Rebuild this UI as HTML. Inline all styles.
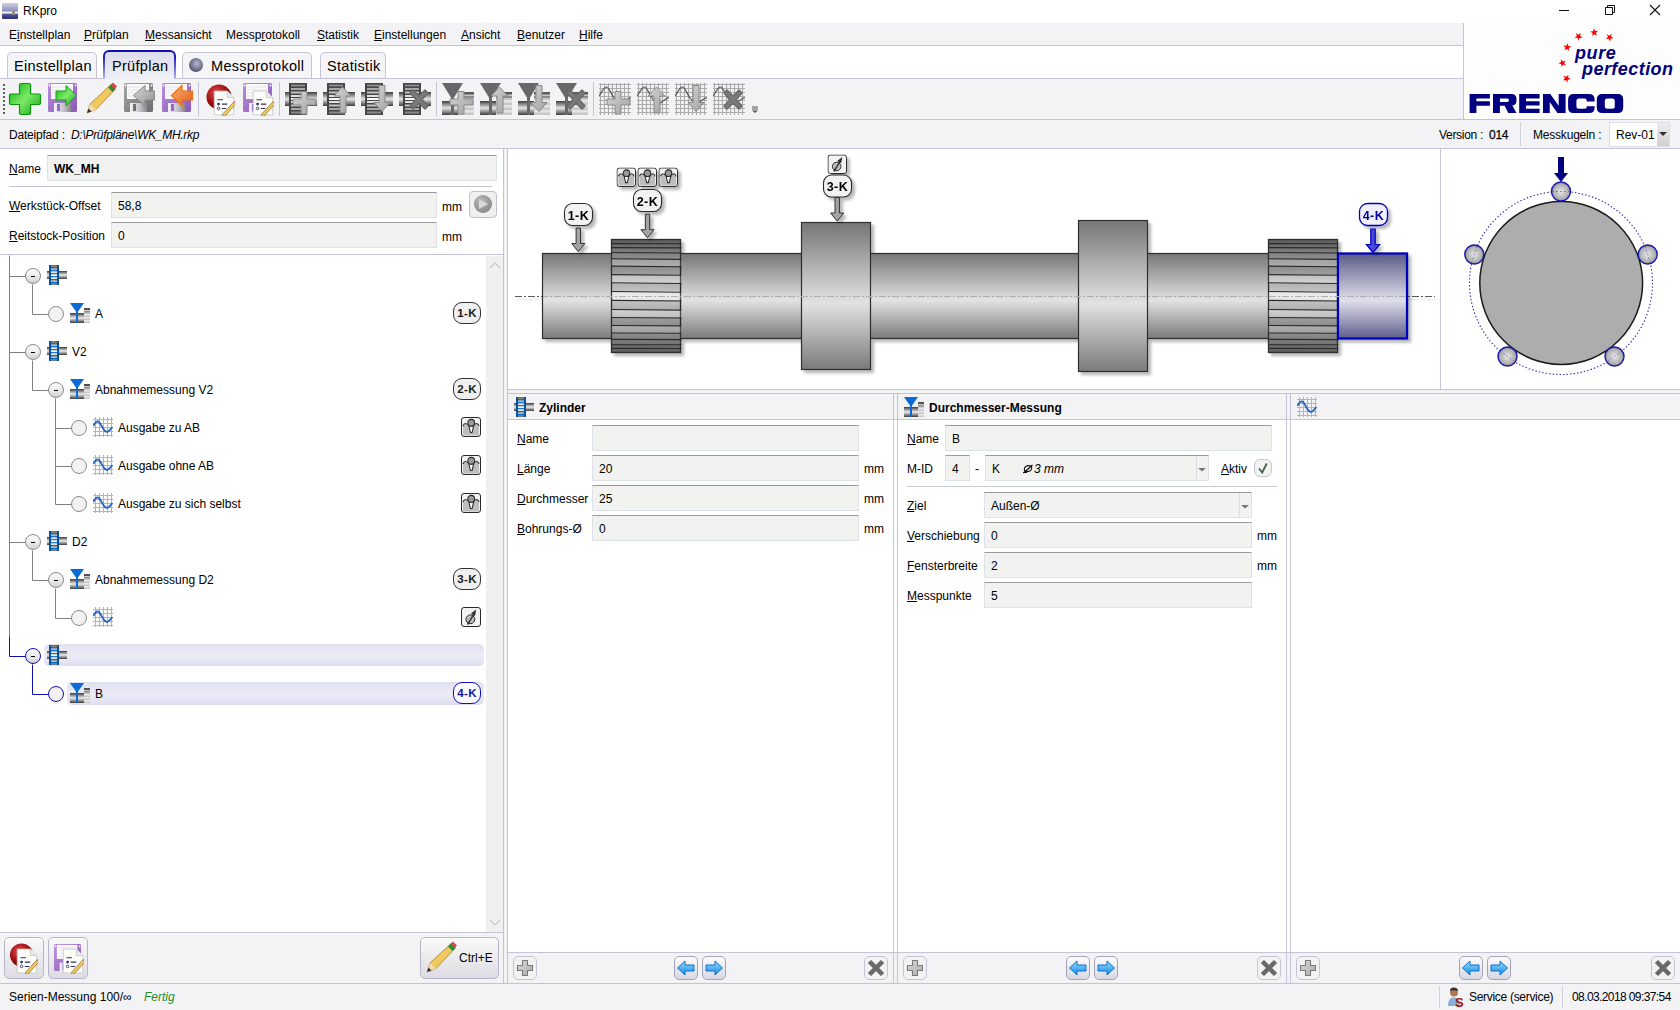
<!DOCTYPE html>
<html><head><meta charset="utf-8">
<style>
*{box-sizing:border-box}
body{margin:0;width:1680px;height:1010px;position:relative;overflow:hidden;background:#f3f3f6;font-family:"Liberation Sans",sans-serif;font-size:12px;color:#000}
.a{position:absolute}
.hl{position:absolute;height:1px;background:#c4c4d6}
.vl{position:absolute;width:1px;background:#c4c4d6}
.t{position:absolute;white-space:nowrap;line-height:14px}
.u{text-decoration:underline}
.fld{position:absolute;background:#f2f2f0;border:1px solid #dde1e8;border-top-color:#9a9a9a;height:26px}
.fld span{position:absolute;left:6px;top:6px;line-height:14px;white-space:nowrap}
.badge{position:absolute;width:28px;height:22px;border:1px solid #333;border-radius:9px;background:#f0f0f0;font-weight:bold;font-size:11.5px;color:#1a1a1a;text-align:center;line-height:21px;letter-spacing:.4px;text-indent:.4px}
.node{position:absolute;width:16px;height:16px;border-radius:50%;border:1px solid #8a8a8a;background:#f2f2f2}
.node.m{background:linear-gradient(#fbfbfb,#f0f0f0 40%,#d2d2d2)}
.node.m::after{content:"";position:absolute;left:5px;top:7px;width:4px;height:1px;background:#000}
.btn{position:absolute;border:1px solid #b5b5c8;border-radius:5px;background:linear-gradient(#fafafa,#dcdce2)}
.pbtn{position:absolute;width:24px;height:24px;border:1px solid #c5c5d8;border-radius:5px;background:#f2f2f0}
.pbtn svg{position:absolute;left:0;top:0}
.pbtn.ar{border-color:#a4a4b8;background:linear-gradient(#fbfbfd,#d8d8e2)}
</style></head><body>
<svg width="0" height="0" style="position:absolute">
<defs>
 <linearGradient id="gSh" x1="0" y1="0" x2="0" y2="1"><stop offset="0" stop-color="#3a3a3a"/><stop offset=".5" stop-color="#ededed"/><stop offset="1" stop-color="#3a3a3a"/></linearGradient>
 <linearGradient id="gBl" x1="0" y1="0" x2="1" y2="0"><stop offset="0" stop-color="#004a98"/><stop offset=".5" stop-color="#0a78e0"/><stop offset="1" stop-color="#004a98"/></linearGradient>
 <linearGradient id="gSt" x1="0" y1="0" x2="0" y2="1"><stop offset="0" stop-color="#202020"/><stop offset=".6" stop-color="#e8e8e8"/><stop offset="1" stop-color="#b0b0b0"/></linearGradient>
 <symbol id="cyl" viewBox="0 0 20 20">
  <rect x="0" y="6" width="20" height="8" fill="url(#gSh)"/>
  <rect x="2" y="0" width="10" height="20" fill="url(#gBl)"/>
  <g fill="#8c8070"><rect x="4" y=".5" width="6" height="1.6"/><rect x="4" y="18.2" width="6" height="1.6"/></g>
  <g fill="#c0b4a0"><rect x="4" y="3.3" width="6" height="1.8"/><rect x="4" y="15.2" width="6" height="1.8"/></g>
  <g fill="#ece4d8"><rect x="4" y="6.3" width="6" height="1.8"/><rect x="4" y="12.2" width="6" height="1.8"/></g>
  <rect x="4" y="9.3" width="6" height="1.8" fill="#fff"/>
 </symbol>
 <symbol id="meas" viewBox="0 0 20 20">
  <rect x="0" y="10" width="14" height="10" fill="url(#gSh)"/>
  <rect x="14" y="5" width="6" height="15" fill="#c8c8c8"/>
  <g fill="#505050"><rect x="14" y="5" width="6" height="2"/></g>
  <g fill="#909090"><rect x="14" y="8" width="6" height="1.5"/></g>
  <g fill="#e8e8e8"><rect x="14" y="11" width="6" height="1.5"/><rect x="14" y="14" width="6" height="1.5"/><rect x="14" y="17" width="6" height="1.5"/></g>
  <path d="M0 0H14L7 10Z" fill="#0a6ad8"/>
  <rect x="6" y="8" width="2" height="12" fill="#0a6ad8"/>
 </symbol>
 <symbol id="wave" viewBox="0 0 20 20">
  <g stroke="#b4b4b4" stroke-width="1" fill="none"><path d="M2.5 0V20M6.5 0V20M10.5 0V20M14.5 0V20M18.5 0V20M0 2.5H20M0 6.5H20M0 10.5H20M0 14.5H20M0 18.5H20"/></g>
  <path d="M0.5 9C2 5 4 3.5 6 5S9 11 11.5 13.5S15 15.5 19.5 10" fill="none" stroke="#2264c0" stroke-width="1.8"/>
 </symbol>
 <symbol id="probe" viewBox="0 0 20 20">
  <rect x=".5" y=".5" width="19" height="19" rx="2.5" fill="#f2f2f2" stroke="#2a2a2a"/>
  <path d="M2 18.5V8.5Q3 6.3 4.7 6.5Q6 6.6 7 7.5L9.6 15.5H11L13.5 7.3Q14.5 6.4 15.8 6.5Q17.5 6.8 18 8.5V18.5Z" fill="#bdbdbd"/>
  <path d="M2 9Q3 6.3 4.7 6.5Q6 6.6 7.3 8M13.2 8Q14.5 6.4 15.8 6.5Q17.5 6.8 18 9" fill="none" stroke="#2a2a2a" stroke-width="1.1"/>
  <path d="M7.9 9L9.4 15.5H11.1L12.6 9Z" fill="#fff" stroke="#2a2a2a" stroke-width="1.1"/>
  <circle cx="10.2" cy="5.8" r="3.4" fill="#9a9a9a" stroke="#2a2a2a" stroke-width="1.1"/>
 </symbol>
 <linearGradient id="gBa" x1="0" y1="0" x2="0" y2="1"><stop offset="0" stop-color="#8cdcff"/><stop offset="1" stop-color="#1a8ae8"/></linearGradient>
 <linearGradient id="gPl" x1="0" y1="0" x2="1" y2="1"><stop offset="0" stop-color="#dcdcdc"/><stop offset="1" stop-color="#a8a8a8"/></linearGradient>
 <symbol id="bplus" viewBox="0 0 22 22"><path d="M8.5 3.5H13.5V8.5H18.5V13.5H13.5V18.5H8.5V13.5H3.5V8.5H8.5Z" fill="url(#gPl)" stroke="#7a7a7a" stroke-width="1.1" stroke-linejoin="round"/></symbol>
 <symbol id="bleft" viewBox="0 0 22 22"><path d="M2.5 11L10 4V8H19V14H10V18Z" fill="url(#gBa)" stroke="#1070c0" stroke-width="1" stroke-linejoin="round"/></symbol>
 <symbol id="bright" viewBox="0 0 22 22"><path d="M19.5 11L12 4V8H3V14H12V18Z" fill="url(#gBa)" stroke="#1070c0" stroke-width="1" stroke-linejoin="round"/></symbol>
 <symbol id="bx" viewBox="0 0 22 22"><path d="M3.5 6L6 3.5L11 8.5L16 3.5L18.5 6L13.5 11L18.5 16L16 18.5L11 13.5L6 18.5L3.5 16L8.5 11Z" fill="#6a6a6a" stroke="#555" stroke-width="1" stroke-linejoin="round"/></symbol>
 <symbol id="dia" viewBox="0 0 20 20">
  <rect x=".5" y=".5" width="19" height="19" rx="2.5" fill="#f2f2f2" stroke="#2a2a2a"/>
  <circle cx="9.4" cy="12.3" r="4.4" fill="#bdbdbd" stroke="#2a2a2a" stroke-width="1"/>
  <path d="M6.7 17.3L13 6.8" stroke="#2a2a2a" stroke-width="1.3"/>
  <path d="M15.2 2.6L10 6.6L14 9Z" fill="#2a2a2a"/>
  <path d="M6.3 18L6.8 14.5L8.5 15.6Z" fill="#2a2a2a"/>
 </symbol>
</defs>
</svg>

<!-- title bar -->
<div class="a" style="left:0;top:0;width:1680px;height:23px;background:#fff"></div>
<div class="t" style="left:23px;top:4px;font-size:12px">RKpro</div>

<!-- menu bar -->
<div class="a" style="left:0;top:23px;width:1463px;height:22px;background:#f3f3f6"></div>
<div class="hl" style="left:0;top:45px;width:1463px"></div>
<div class="t" style="left:9px;top:28px">E<span class="u">i</span>nstellplan</div>
<div class="t" style="left:84px;top:28px"><span class="u">P</span>rüfplan</div>
<div class="t" style="left:145px;top:28px"><span class="u">M</span>essansicht</div>
<div class="t" style="left:226px;top:28px">Messp<span class="u">r</span>otokoll</div>
<div class="t" style="left:317px;top:28px"><span class="u">S</span>tatistik</div>
<div class="t" style="left:374px;top:28px"><span class="u">E</span>instellungen</div>
<div class="t" style="left:461px;top:28px"><span class="u">A</span>nsicht</div>
<div class="t" style="left:517px;top:28px"><span class="u">B</span>enutzer</div>
<div class="t" style="left:579px;top:28px"><span class="u">H</span>ilfe</div>

<!-- tab bar -->
<div class="a" style="left:0;top:46px;width:1463px;height:32px;background:#fff"></div>
<div class="hl" style="left:0;top:78px;width:1463px"></div>

<div class="a" style="left:7px;top:52px;width:90px;height:26px;border:1px solid #c4c4d6;border-bottom:none;border-radius:5px 5px 0 0;background:#f5f5f8"></div>
<div class="t" style="left:14px;top:58px;font-size:14.5px;line-height:17px;letter-spacing:.3px">Einstellplan</div>
<div class="a" style="left:103px;top:50px;width:73px;height:29px;border-radius:6px 6px 0 0;background:linear-gradient(#0c0cb0,#2020b8 25%,#b8b8e8)"></div>
<div class="a" style="left:105px;top:52px;width:69px;height:27px;border-radius:4px 4px 0 0;background:linear-gradient(#dcdcee,#f0f0f6)"></div>
<div class="t" style="left:112px;top:58px;font-size:14.5px;line-height:17px;letter-spacing:.3px">Prüfplan</div>
<div class="a" style="left:182px;top:52px;width:130px;height:26px;border:1px solid #c4c4d6;border-bottom:none;border-radius:5px 5px 0 0;background:#f5f5f8"></div>
<div class="a" style="left:189px;top:58px;width:14px;height:14px;border-radius:50%;background:radial-gradient(circle at 55% 40%,#b8b8cc,#5a5a78 70%,#4a4a66)"></div>
<div class="t" style="left:211px;top:58px;font-size:14.5px;line-height:17px;letter-spacing:.3px">Messprotokoll</div>
<div class="a" style="left:320px;top:52px;width:66px;height:26px;border:1px solid #c4c4d6;border-bottom:none;border-radius:5px 5px 0 0;background:#f5f5f8"></div>
<div class="t" style="left:327px;top:58px;font-size:14.5px;line-height:17px;letter-spacing:.3px">Statistik</div>

<!-- toolbar -->
<div class="hl" style="left:0;top:119px;width:1680px"></div>
<svg class="a" style="left:0;top:78px" width="770" height="41" viewBox="0 78 770 41">
 <defs>
  <linearGradient id="gGr" x1="0" y1="0" x2="1" y2="1"><stop offset="0" stop-color="#0cb40c"/><stop offset=".5" stop-color="#7ee86a"/><stop offset="1" stop-color="#0aa80a"/></linearGradient>
  <linearGradient id="gPu" x1="0" y1="0" x2="1" y2="1"><stop offset="0" stop-color="#b890dc"/><stop offset="1" stop-color="#8a58b8"/></linearGradient>
  <linearGradient id="gGy" x1="0" y1="0" x2="1" y2="1"><stop offset="0" stop-color="#a8a8a8"/><stop offset="1" stop-color="#6c6c6c"/></linearGradient>
  <linearGradient id="gShut" x1="0" y1="0" x2="1" y2="0"><stop offset="0" stop-color="#f4f4f4"/><stop offset=".6" stop-color="#c0c0c8"/><stop offset="1" stop-color="#888"/></linearGradient>
  <linearGradient id="gOr" x1="0" y1="0" x2="1" y2="1"><stop offset="0" stop-color="#ffb070"/><stop offset="1" stop-color="#e06010"/></linearGradient>
  <linearGradient id="gArGy" x1="0" y1="0" x2="1" y2="1"><stop offset="0" stop-color="#d8d8d8"/><stop offset="1" stop-color="#909090"/></linearGradient>
  <radialGradient id="gRed" cx=".4" cy=".35" r=".7"><stop offset="0" stop-color="#e05050"/><stop offset=".6" stop-color="#a01010"/><stop offset="1" stop-color="#700000"/></radialGradient>
  <linearGradient id="gSh32" x1="0" y1="0" x2="0" y2="1"><stop offset="0" stop-color="#3c3c3c"/><stop offset=".5" stop-color="#e6e6e6"/><stop offset="1" stop-color="#3c3c3c"/></linearGradient>
  <linearGradient id="gOv" x1="0" y1="0" x2="1" y2="1"><stop offset="0" stop-color="#d6d6d6"/><stop offset="1" stop-color="#a0a0a0"/></linearGradient>
  <symbol id="floppy" viewBox="0 0 30 29">
   <rect x="0" y="0" width="29" height="29" rx="1.5" fill="var(--fc)"/>
   <rect x="3" y="1" width="22" height="15" fill="#fafafa"/>
   <g stroke="#dcdce8" stroke-width=".8"><path d="M4 4H24M4 7H24M4 10H24M4 13H24"/></g>
   <rect x="6" y="20" width="17" height="9" fill="url(#gShut)"/>
   <rect x="9" y="21" width="3" height="7" fill="var(--fc2)"/>
   <circle cx="1.5" cy="2.5" r=".9" fill="#fff"/><circle cx="27.5" cy="2.5" r=".9" fill="#fff"/>
  </symbol>
  <symbol id="doc" viewBox="0 0 20 24">
   <path d="M1 1H13L19 7V23H1Z" fill="#fcfcf8" stroke="#c8c8c8" stroke-width=".8"/>
   <path d="M13 1V7H19" fill="#e8e8e8" stroke="#c8c8c8" stroke-width=".8"/>
   <g stroke="#303060" stroke-width="1"><path d="M4 9H9M8 13H13M8 17H12"/></g>
   <circle cx="5" cy="13" r="1.3" fill="#303060"/><circle cx="5" cy="17" r="1.2" fill="none" stroke="#303060" stroke-width=".8"/>
   <path d="M9 22L19 11L21 13L11 24L8.5 24.5Z" fill="#f0c860" stroke="#806020" stroke-width=".6"/>
   <path d="M19 11L20.5 9.5L22.5 11.5L21 13Z" fill="#e06060"/>
  </symbol>
  <symbol id="gcyl" viewBox="0 0 32 32">
   <rect x="0" y="9" width="32" height="14" fill="url(#gSh32)"/>
   <rect x="4" y="0" width="18" height="32" fill="#454545"/>
   <g fill="#8a8a8a"><rect x="6" y="1.5" width="14" height="2"/><rect x="6" y="28.5" width="14" height="2"/></g>
   <g fill="#a8a8a8"><rect x="6" y="5" width="14" height="2"/><rect x="6" y="25" width="14" height="2"/></g>
   <g fill="#c4c4c4"><rect x="6" y="8.5" width="14" height="2"/><rect x="6" y="21.5" width="14" height="2"/></g>
   <g fill="#e0e0e0"><rect x="6" y="12" width="14" height="2"/><rect x="6" y="18" width="14" height="2"/></g>
   <rect x="6" y="15" width="14" height="2" fill="#fafafa"/>
  </symbol>
  <symbol id="gmeas" viewBox="0 0 32 32">
   <rect x="0" y="18" width="16" height="14" fill="url(#gSh32)"/>
   <rect x="16" y="9" width="16" height="23" fill="#c8c8c8"/>
   <g fill="#5a5a5a"><rect x="16" y="9" width="16" height="2.5"/></g>
   <g fill="#8c8c8c"><rect x="16" y="13" width="16" height="2"/></g>
   <g fill="#e4e4e4"><rect x="16" y="17" width="16" height="2.5"/><rect x="16" y="22" width="16" height="2.5"/><rect x="16" y="27" width="16" height="2.5"/></g>
   <path d="M0 0H21L10.5 17Z" fill="#686868"/>
   <rect x="9" y="14" width="3" height="18" fill="#686868"/>
  </symbol>
  <symbol id="ggrid" viewBox="0 0 32 32">
   <g stroke="#ababab" stroke-width="1.1" fill="none"><path d="M1.5 0V32M5.5 0V32M9.5 0V32M13.5 0V32M17.5 0V32M21.5 0V32M25.5 0V32M29.5 0V32M0 1.5H32M0 5.5H32M0 9.5H32M0 13.5H32M0 17.5H32M0 21.5H32M0 25.5H32M0 29.5H32"/></g>
   <path d="M0 13C3 9 5 4 7.5 4S12 11 15 15S21 22 25 19S30 14 32 15" fill="none" stroke="#555" stroke-width="1.2"/>
  </symbol>
  <symbol id="oplus" viewBox="0 0 32 32"><path d="M16 8.5H22V16H31V22H22V31H16V22H8V16H16Z" fill="url(#gOv)" stroke="#8a8a8a" stroke-width="1"/></symbol>
  <symbol id="oup" viewBox="0 0 32 32"><path d="M19.5 4L28 13H23V30H17V13H11Z" fill="url(#gOv)" stroke="#8a8a8a" stroke-width="1"/></symbol>
  <symbol id="odown" viewBox="0 0 32 32"><path d="M18 2.5H24V19.5H29L21 28.5L13 19.5H18Z" fill="url(#gOv)" stroke="#8a8a8a" stroke-width="1"/></symbol>
  <symbol id="ox" viewBox="0 0 32 32"><path d="M11 10L14 7L20 13L26 7L29 10L23 16.5L29 23L26 26L20 20L14 26L11 23L17 16.5Z" fill="#7a7a7a" stroke="#6a6a6a" stroke-width="1.5" stroke-linejoin="round"/></symbol>
 </defs>
 <g fill="#606060"><rect x="3" y="84" width="2" height="2"/><rect x="3" y="88" width="2" height="2"/><rect x="3" y="92" width="2" height="2"/><rect x="3" y="96" width="2" height="2"/><rect x="3" y="100" width="2" height="2"/><rect x="3" y="104" width="2" height="2"/><rect x="3" y="108" width="2" height="2"/><rect x="3" y="112" width="2" height="2"/></g>
 <!-- green plus -->
 <path d="M21 83.5H29C30 83.5 30.5 84 30.5 85V94H39C40 94 40.5 94.5 40.5 95.5V103C40.5 104 40 104.5 39 104.5H30.5V113C30.5 114 30 114.5 29 114.5H21C20 114.5 19.5 114 19.5 113V104.5H11C10 104.5 9.5 104 9.5 103V95.5C9.5 94.5 10 94 11 94H19.5V85C19.5 84 20 83.5 21 83.5Z" fill="url(#gGr)" stroke="#089808" stroke-width="1.2"/>
 <!-- floppy green arrow -->
 <svg x="48" y="83" width="30" height="29" style="--fc:url(#gPu);--fc2:#9a68c8"><use href="#floppy"/></svg>
 <path d="M56 91H66V85.5L76.5 95.5L66 106V100H56Z" fill="url(#gGr)" stroke="#18a018" stroke-width="1"/>
 <!-- pencil -->
 <path d="M87 113L90 104L111 84.5L115.5 89L96 109.5Z" fill="#f0c860" stroke="#b08030" stroke-width=".8"/>
 <path d="M87 113L90 104L93 107L96 109.5Z" fill="#f4dcb0"/>
 <path d="M87 113L88.5 108.5L91.5 111.5Z" fill="#303030"/>
 <path d="M108 87.5L111 84.5L115.5 89L112.5 92Z" fill="#2a8a3a"/>
 <path d="M110.5 85L113 82.5L117 86.5L114.5 89Z" fill="#d04848"/>
 <!-- grey floppy grey arrow -->
 <svg x="124" y="83" width="30" height="29" style="--fc:url(#gGy);--fc2:#707070"><use href="#floppy"/></svg>
 <path d="M154.5 91H145V85.5L133.5 95.5L145 106V100H154.5Z" fill="url(#gArGy)" stroke="#888" stroke-width="1"/>
 <!-- purple floppy orange arrow -->
 <svg x="162" y="83" width="30" height="29" style="--fc:url(#gPu);--fc2:#9a68c8"><use href="#floppy"/></svg>
 <path d="M192.5 91H182V85.5L171.5 95.5L182 106V100H192.5Z" fill="url(#gOr)" stroke="#f07010" stroke-width="1.2"/>
 <rect x="198" y="82" width="1" height="34" fill="#c4c4d6"/>
 <!-- red circle doc -->
 <circle cx="219" cy="97" r="12.5" fill="url(#gRed)"/>
 <svg x="213" y="90" width="22" height="26" viewBox="0 0 22 26"><use href="#doc"/></svg>
 <!-- floppy doc -->
 <svg x="243" y="83" width="30" height="29" style="--fc:url(#gPu);--fc2:#9a68c8"><use href="#floppy"/></svg>
 <svg x="252" y="90" width="22" height="26" viewBox="0 0 22 26"><use href="#doc"/></svg>
 <rect x="279" y="82" width="1" height="34" fill="#c4c4d6"/>
 <!-- cylinders -->
 <use href="#gcyl" x="285" y="83" width="32" height="32"/><use href="#oplus" x="285" y="83" width="32" height="32"/>
 <use href="#gcyl" x="323" y="83" width="32" height="32"/><use href="#oup" x="323" y="83" width="32" height="32"/>
 <use href="#gcyl" x="361" y="83" width="32" height="32"/><use href="#odown" x="361" y="83" width="32" height="32"/>
 <use href="#gcyl" x="399" y="83" width="32" height="32"/><use href="#ox" x="399" y="83" width="32" height="32"/>
 <rect x="436" y="82" width="1" height="34" fill="#c4c4d6"/>
 <use href="#gmeas" x="442" y="83" width="32" height="32"/><use href="#oplus" x="442" y="83" width="32" height="32"/>
 <use href="#gmeas" x="480" y="83" width="32" height="32"/><use href="#oup" x="480" y="83" width="32" height="32"/>
 <use href="#gmeas" x="518" y="83" width="32" height="32"/><use href="#odown" x="518" y="83" width="32" height="32"/>
 <use href="#gmeas" x="556" y="83" width="32" height="32"/><use href="#ox" x="556" y="83" width="32" height="32"/>
 <rect x="593" y="82" width="1" height="34" fill="#c4c4d6"/>
 <use href="#ggrid" x="599" y="83" width="32" height="32"/><use href="#oplus" x="599" y="83" width="32" height="32"/>
 <use href="#ggrid" x="637" y="83" width="32" height="32"/><use href="#oup" x="637" y="83" width="32" height="32"/>
 <use href="#ggrid" x="675" y="83" width="32" height="32"/><use href="#odown" x="675" y="83" width="32" height="32"/>
 <use href="#ggrid" x="713" y="83" width="32" height="32"/><use href="#ox" x="713" y="83" width="32" height="32"/>
 <path d="M752 107H758M752 109H758" stroke="#555" stroke-width="1"/>
 <path d="M752 110.5H758L755 113Z" fill="#555"/>
</svg>

<!-- logo area -->
<div class="a" style="left:1464px;top:23px;width:216px;height:96px;background:#fdfdfd"></div>
<div class="vl" style="left:1463px;top:23px;height:96px"></div>
<svg class="a" style="left:1464px;top:23px" width="216" height="96" viewBox="1464 23 216 96">
 <defs><path id="star" d="M0,-4.2L1,-1.35L4,-1.3L1.6,.5L2.5,3.4L0,1.7L-2.5,3.4L-1.6,.5L-4,-1.3L-1,-1.35Z" fill="#ff0000"/></defs>
 <use href="#star" transform="translate(1594.3 32.5) rotate(-5)"/>
 <use href="#star" transform="translate(1578.5 36.5) rotate(-36)"/>
 <use href="#star" transform="translate(1609.6 37.3) rotate(30)"/>
 <use href="#star" transform="translate(1567.2 47.3) rotate(-64)"/>
 <use href="#star" transform="translate(1562.5 63) rotate(-92)"/>
 <use href="#star" transform="translate(1566.6 78.5) rotate(-118)"/>
 <text x="1575" y="59" font-family="Liberation Sans" font-size="18" font-weight="bold" font-style="italic" fill="#000080" letter-spacing=".6">pure</text>
 <text x="1582" y="75" font-family="Liberation Sans" font-size="18" font-weight="bold" font-style="italic" fill="#000080" letter-spacing=".45">perfection</text>
 <g fill="#000080" fill-rule="evenodd">
  <path d="M1469.6 94.1H1489.9V98.6H1476.4V101.25H1489.9V105.7H1476.4V112.9H1469.6Z"/>
  <path d="M1493 94.1H1511Q1516.5 94.1 1516.5 99V100.5Q1516.5 104.8 1512.3 105.5L1516.5 112.9H1508.3L1504.6 105.7H1499.9V112.9H1493ZM1499.9 98.6H1507.3Q1509 98.6 1509 100.25Q1509 101.9 1507.3 101.9H1499.9Z"/>
  <path d="M1519.2 94.1H1539.6V98.5H1526V101.3H1539.6V105.6H1526V108.8H1539.6V112.9H1519.2Z"/>
  <path d="M1543 94.1H1550.3L1558.7 105.7V94.1H1565.6V112.9H1557.4L1549.75 102.1V112.9H1543Z"/>
  <path d="M1573.6 94.1H1589.1Q1594.6 94.1 1594.6 99.6V101.6H1586.8V100.9Q1586.8 98.4 1584.3 98.4H1578.9Q1576.4 98.4 1576.4 100.9V106.25Q1576.4 108.75 1578.9 108.75H1584.3Q1586.8 108.75 1586.8 106.25H1594.6V107.4Q1594.6 112.9 1589.1 112.9H1573.6Q1568.1 112.9 1568.1 107.4V99.6Q1568.1 94.1 1573.6 94.1Z"/>
  <path d="M1602.3 94.1H1617.7Q1623.2 94.1 1623.2 99.6V107.4Q1623.2 112.9 1617.7 112.9H1602.3Q1596.8 112.9 1596.8 107.4V99.6Q1596.8 94.1 1602.3 94.1ZM1607.3 98.4Q1604.8 98.4 1604.8 100.9V106.25Q1604.8 108.75 1607.3 108.75H1612.3Q1614.8 108.75 1614.8 106.25V100.9Q1614.8 98.4 1612.3 98.4Z"/>
 </g>
</svg>
<!-- window controls -->
<svg class="a" style="left:1550px;top:0" width="130" height="23">
 <path d="M9 10.5H19" stroke="#111" stroke-width="1"/>
 <path d="M55.5 7.5H62.5V14.5H55.5Z M57.5 7.5V5.5H64.5V12.5H62.5" fill="none" stroke="#111" stroke-width="1"/>
 <path d="M100 5L110 15M110 5L100 15" stroke="#111" stroke-width="1.1"/>
</svg>
<!-- path bar right -->
<div class="t" style="left:1439px;top:128px;letter-spacing:-.3px">Version :&nbsp;<b style="font-weight:normal;-webkit-text-stroke:.25px #000"> 014</b></div>
<div class="vl" style="left:1520px;top:122px;height:24px;background:#d0d0dc"></div>
<div class="t" style="left:1533px;top:128px;letter-spacing:-.2px">Messkugeln :</div>
<div class="a" style="left:1609px;top:122px;width:61px;height:25px;background:#fff;border:1px solid #dcdce6"></div>
<div class="a" style="left:1657px;top:123px;width:12px;height:23px;background:linear-gradient(#ececec,#d0d0d0)"></div>
<svg class="a" style="left:1659px;top:132px" width="8" height="5"><path d="M0 0H8L4 4Z" fill="#333"/></svg>
<div class="t" style="left:1616px;top:128px">Rev-01</div>

<!-- path bar -->
<div class="t" style="left:9px;top:128px;letter-spacing:-.2px">Dateipfad :</div>
<div class="t" style="left:71px;top:128px;font-style:italic;letter-spacing:-.3px">D:\Prüfpläne\WK_MH.rkp</div>
<div class="hl" style="left:0;top:148px;width:1680px"></div>

<!-- left panel -->
<div class="a" style="left:0;top:149px;width:503px;height:105px;background:#fff"></div>
<div class="hl" style="left:0;top:254px;width:503px"></div>
<div class="a" style="left:0;top:255px;width:503px;height:677px;background:#fff"></div>
<div class="hl" style="left:0;top:932px;width:503px"></div>

<!-- left form -->
<div class="t" style="left:9px;top:162px"><span class="u">N</span>ame</div>
<div class="fld" style="left:47px;top:155px;width:450px"><span style="font-weight:bold">WK_MH</span></div>
<div class="hl" style="left:9px;top:186px;width:483px"></div>
<div class="t" style="left:9px;top:199px"><span class="u">W</span>erkstück-Offset</div>
<div class="fld" style="left:111px;top:192px;width:326px"><span>58,8</span></div>
<div class="t" style="left:442px;top:200px">mm</div>
<div class="btn" style="left:469px;top:191px;width:28px;height:27px;border-radius:4px;border-color:#c0c0d0;background:#f0f0ee"><div class="a" style="left:4px;top:3px;width:18px;height:18px;border-radius:50%;background:radial-gradient(circle at 40% 35%,#bbb,#777)"></div><svg class="a" style="left:9px;top:7px" width="9" height="10"><path d="M0 0L9 5L0 10Z" fill="#d8d8d8"/></svg></div>
<div class="t" style="left:9px;top:229px"><span class="u">R</span>eitstock-Position</div>
<div class="fld" style="left:111px;top:222px;width:326px"><span>0</span></div>
<div class="t" style="left:442px;top:230px">mm</div>

<!-- tree -->
<div class="a" style="left:486px;top:256px;width:17px;height:676px;background:#f0f0f0"></div>
<svg class="a" style="left:489px;top:262px" width="12" height="8"><path d="M1 6L6 1L11 6" fill="none" stroke="#c8c8c8" stroke-width="1.2"/></svg>
<svg class="a" style="left:489px;top:918px" width="12" height="8"><path d="M1 2L6 7L11 2" fill="none" stroke="#c8c8c8" stroke-width="1.2"/></svg>

<!-- highlight rows -->
<div class="a" style="left:44px;top:644px;width:440px;height:22px;border-radius:5px;background:linear-gradient(#e0e0f0,#ececf7 50%,#dedef0)"></div>
<div class="a" style="left:67px;top:682px;width:417px;height:23px;border-radius:5px;background:linear-gradient(#e0e0f0,#ececf7 50%,#dedef0)"></div>

<svg class="a" style="left:0;top:255px" width="120" height="460">
 <g fill="none" stroke="#808080" stroke-width="1" transform="translate(0.5,0.5)">
  <path d="M9 0V381"/>
  <path d="M9 21H25M9 97H25M9 287H25"/>
  <path d="M32 29V59H48M32 105V135H48M32 295V325H48"/>
  <path d="M55 143V249M55 173H71M55 211H71M55 249H71"/>
  <path d="M55 333V363H71"/>
 </g>
 <g fill="none" stroke="#1010b0" stroke-width="1" transform="translate(0.5,0.5)">
  <path d="M9 381V401H25"/>
  <path d="M32 409V439H48"/>
 </g>
</svg>

<div class="node m" style="left:25px;top:268px"></div>
<div class="node" style="left:48px;top:306px"></div>
<div class="node m" style="left:25px;top:344px"></div>
<div class="node m" style="left:48px;top:382px"></div>
<div class="node" style="left:71px;top:420px"></div>
<div class="node" style="left:71px;top:458px"></div>
<div class="node" style="left:71px;top:496px"></div>
<div class="node m" style="left:25px;top:534px"></div>
<div class="node m" style="left:48px;top:572px"></div>
<div class="node" style="left:71px;top:610px"></div>
<div class="node m" style="left:25px;top:648px;border-color:#1010b0"></div>
<div class="node" style="left:48px;top:686px;border-color:#1010b0"></div>

<svg class="a" style="left:47px;top:265px" width="20" height="20"><use href="#cyl"/></svg>
<svg class="a" style="left:70px;top:303px" width="20" height="20"><use href="#meas"/></svg>
<svg class="a" style="left:47px;top:341px" width="20" height="20"><use href="#cyl"/></svg>
<svg class="a" style="left:70px;top:379px" width="20" height="20"><use href="#meas"/></svg>
<svg class="a" style="left:93px;top:417px" width="20" height="20"><use href="#wave"/></svg>
<svg class="a" style="left:93px;top:455px" width="20" height="20"><use href="#wave"/></svg>
<svg class="a" style="left:93px;top:493px" width="20" height="20"><use href="#wave"/></svg>
<svg class="a" style="left:47px;top:531px" width="20" height="20"><use href="#cyl"/></svg>
<svg class="a" style="left:70px;top:569px" width="20" height="20"><use href="#meas"/></svg>
<svg class="a" style="left:93px;top:607px" width="20" height="20"><use href="#wave"/></svg>
<svg class="a" style="left:47px;top:645px" width="20" height="20"><use href="#cyl"/></svg>
<svg class="a" style="left:70px;top:683px" width="20" height="20"><use href="#meas"/></svg>

<div class="t" style="left:95px;top:307px">A</div>
<div class="t" style="left:72px;top:345px">V2</div>
<div class="t" style="left:95px;top:383px">Abnahmemessung V2</div>
<div class="t" style="left:118px;top:421px">Ausgabe zu AB</div>
<div class="t" style="left:118px;top:459px">Ausgabe ohne AB</div>
<div class="t" style="left:118px;top:497px">Ausgabe zu sich selbst</div>
<div class="t" style="left:72px;top:535px">D2</div>
<div class="t" style="left:95px;top:573px">Abnahmemessung D2</div>
<div class="t" style="left:95px;top:687px">B</div>

<div class="badge" style="left:453px;top:302px">1-K</div>
<div class="badge" style="left:453px;top:378px">2-K</div>
<div class="badge" style="left:453px;top:568px">3-K</div>
<div class="badge" style="left:453px;top:682px;border-color:#1010c0;color:#1010b0;background:#fafaff">4-K</div>
<svg class="a" style="left:461px;top:417px" width="20" height="20"><use href="#probe"/></svg>
<svg class="a" style="left:461px;top:455px" width="20" height="20"><use href="#probe"/></svg>
<svg class="a" style="left:461px;top:493px" width="20" height="20"><use href="#probe"/></svg>
<svg class="a" style="left:461px;top:607px" width="20" height="20"><use href="#dia"/></svg>

<!-- left bottom buttons -->
<div class="btn" style="left:4px;top:937px;width:40px;height:42px"></div>
<div class="btn" style="left:48px;top:937px;width:40px;height:42px"></div>
<div class="btn" style="left:420px;top:937px;width:79px;height:42px"></div>
<svg class="a" style="left:8px;top:942px" width="34" height="34" viewBox="205 84 34 34"><circle cx="218.5" cy="97" r="11.5" fill="url(#gRed)"/><svg x="213" y="90" width="22" height="26" viewBox="0 0 22 26"><use href="#doc"/></svg></svg>
<svg class="a" style="left:52px;top:942px" width="34" height="34" viewBox="241 84 34 34"><svg x="243" y="86" width="28" height="27" style="--fc:url(#gPu);--fc2:#9a68c8"><use href="#floppy"/></svg><svg x="251" y="90" width="22" height="26" viewBox="0 0 22 26"><use href="#doc"/></svg></svg>
<svg class="a" style="left:424px;top:941px" width="34" height="34" viewBox="84 82 34 34"><path d="M87 113L90 104L111 84.5L115.5 89L96 109.5Z" fill="#f0c860" stroke="#b08030" stroke-width=".8"/><path d="M87 113L90 104L93 107L96 109.5Z" fill="#f4dcb0"/><path d="M87 113L88.5 108.5L91.5 111.5Z" fill="#303030"/><path d="M108 87.5L111 84.5L115.5 89L112.5 92Z" fill="#2a8a3a"/><path d="M110.5 85L113 82.5L117 86.5L114.5 89Z" fill="#d04848"/></svg>
<!-- title icon -->
<div class="a" style="left:2px;top:3px;width:16px;height:16px;border-radius:1px;background:linear-gradient(#cfd0e4,#9696c4 45%,#5a5aa0 65%,#2c2c7c)"></div>
<div class="a" style="left:2px;top:11px;width:16px;height:3px;background:linear-gradient(#a0a0a0,#f0f0ea,#a0a0a0)"></div>
<div class="a" style="left:12px;top:10px;width:3px;height:5px;background:#909090"></div>
<!-- status user icon -->
<svg class="a" style="left:1447px;top:987px" width="18" height="21">
 <circle cx="7" cy="5.5" r="4" fill="#b07850"/><path d="M3 4C3 1 5 .5 7 .5S11 1.5 11 4L10 3.5H4Z" fill="#333"/>
 <path d="M1 19C1 13 3 10.5 7 10.5S13 13 13 19Z" fill="#8ab0d8"/>
 <text x="8" y="19.5" font-family="Liberation Sans" font-weight="bold" font-size="13" fill="#a01010">S</text>
</svg>
<div class="t" style="left:459px;top:951px">Ctrl+E</div>

<!-- status bar -->
<div class="t" style="left:9px;top:990px">Serien-Messung 100/∞</div>
<div class="t" style="left:144px;top:990px;color:#1f8a1f;font-style:italic">Fertig</div>
<div class="vl" style="left:1439px;top:986px;height:22px;background:#d0d0dc"></div>
<div class="vl" style="left:1562px;top:986px;height:22px;background:#d0d0dc"></div>
<div class="t" style="left:1469px;top:990px;letter-spacing:-.3px">Service (service)</div>
<div class="t" style="left:1572px;top:990px;letter-spacing:-0.6px">08.03.2018 09:37:54</div>

<!-- splitter -->
<div class="vl" style="left:503px;top:149px;height:834px"></div>
<div class="vl" style="left:507px;top:149px;height:834px"></div>

<!-- graphics -->
<div class="a" style="left:508px;top:149px;width:1172px;height:240px;background:#fff"></div>
<div class="vl" style="left:1440px;top:149px;height:240px"></div>
<svg class="a" style="left:508px;top:149px" width="932" height="240" viewBox="508 149 932 240">
 <defs>
  <linearGradient id="gCy" x1="0" y1="0" x2="0" y2="1"><stop offset="0" stop-color="#767676"/><stop offset=".55" stop-color="#e2e2e2"/><stop offset="1" stop-color="#7a7a7a"/></linearGradient>
  <linearGradient id="gCyB" x1="0" y1="0" x2="0" y2="1"><stop offset="0" stop-color="#5a5a86"/><stop offset=".55" stop-color="#e0e0ec"/><stop offset="1" stop-color="#5e5e8c"/></linearGradient>
  <linearGradient id="gGe" x1="0" y1="0" x2="0" y2="1"><stop offset="0" stop-color="#5c5c5c"/><stop offset=".12" stop-color="#808080"/><stop offset=".5" stop-color="#eaeaea"/><stop offset=".88" stop-color="#808080"/><stop offset="1" stop-color="#5c5c5c"/></linearGradient>
  <filter id="sh" x="-10%" y="-10%" width="130%" height="130%"><feGaussianBlur in="SourceAlpha" stdDeviation="1.6"/><feOffset dx="2.5" dy="3" result="b"/><feComponentTransfer in="b" result="c"><feFuncA type="linear" slope=".28"/></feComponentTransfer><feMerge><feMergeNode in="c"/><feMergeNode in="SourceGraphic"/></feMerge></filter>
  <g id="gear">
   <rect x="0" y="0" width="69" height="113" fill="url(#gGe)" stroke="#2e2e2e" stroke-width="1.3"/>
   <g fill="#fff" opacity=".15"><rect x="0" y="19.5" width="69" height="6.9"/><rect x="0" y="35.3" width="70" height="8.3"/><rect x="0" y="52" width="70" height="9"/><rect x="0" y="70" width="70" height="8"/><rect x="0" y="86" width="70" height="7.5"/></g>
   <g fill="#000" opacity=".12"><rect x="0" y="27" width="70" height="8.3"/><rect x="0" y="43.6" width="70" height="8.4"/><rect x="0" y="61" width="70" height="9"/><rect x="0" y="78" width="70" height="8"/></g>
   <g stroke="#2a2a2a" stroke-width="1.1" fill="none">
    <path d="M0 4.1L70 4.3M0 8.1L70 8.4M0 13L70 13.5M0 19.2L70 19.9M0 26.6L70 27.3M0 35.1L70 35.8M0 43.3L70 44M0 52L70 52.7M0 60.9L70 61.5M0 70L70 70.6M0 78L70 78.5M0 86L70 86.4M0 93.5L70 93.8M0 99.9L70 100.1M0 105.2L70 105.3M0 108.9L70 109"/>
   </g>
  </g>
  <g id="bdg">
   <rect x="0.5" y="0.5" width="28" height="22" rx="8" fill="#f2f2f2" stroke="#2a2a2a" stroke-width="1.1"/>
  </g>
  <path id="arr" d="M-2.2 0H2.2V15.5H6.6L0 23.5L-6.6 15.5H-2.2Z"/>
 </defs>
 <path d="M515 296.5H1435" stroke="#5a5a5a" stroke-width="1.2" stroke-dasharray="7 2 2 2"/><path d="M517 299.5H542M1409 299.5H1437" stroke="#000" stroke-opacity=".05" stroke-width="2.5"/>
 <g filter="url(#sh)">
  <rect x="542.5" y="253.5" width="865" height="85" fill="url(#gCy)" stroke="#2e2e2e" stroke-width="1.2"/>
  <rect x="801.5" y="222.5" width="69" height="147" fill="url(#gCy)" stroke="#2e2e2e" stroke-width="1.2"/>
  <rect x="1078.5" y="220.5" width="69" height="151" fill="url(#gCy)" stroke="#2e2e2e" stroke-width="1.2"/>
  <use href="#gear" transform="translate(611.5 239.5)"/>
  <use href="#gear" transform="translate(1268.5 239.5)"/>
  <rect x="1338" y="253.5" width="69" height="85" fill="url(#gCyB)" stroke="#0000c0" stroke-width="2.2"/>
 </g>
 <path d="M543 296.5H1407" stroke="#b0b0b0" stroke-width="1.1" stroke-dasharray="7 2 2 2" stroke-dashoffset="2"/>
 <g filter="url(#sh)">
  <use href="#arr" transform="translate(578.3 228)" fill="#a4a4a4" stroke="#333" stroke-width="1"/>
  <use href="#arr" transform="translate(647.5 214.2)" fill="#a4a4a4" stroke="#333" stroke-width="1"/>
  <use href="#arr" transform="translate(837.2 197.5)" fill="#a4a4a4" stroke="#333" stroke-width="1"/>
  <use href="#arr" transform="translate(1373 229)" fill="#4a4ad8" stroke="#0000c0" stroke-width="1.2"/>
  <use href="#bdg" transform="translate(564 203)"/>
  <use href="#bdg" transform="translate(633 189)"/>
  <use href="#bdg" transform="translate(823 174.5)"/>
  <rect x="1359.5" y="203.5" width="28" height="22" rx="8" fill="#f0f0fc" stroke="#0000c0" stroke-width="1.3"/>
  <use href="#probe" x="616.5" y="167.5" width="19.5" height="19.5"/>
  <use href="#probe" x="637.5" y="167.5" width="19.5" height="19.5"/>
  <use href="#probe" x="658.5" y="167.5" width="19.5" height="19.5"/>
  <use href="#dia" x="827.5" y="154.5" width="19.5" height="19.5"/>
 </g>
 <g font-family="Liberation Sans" font-weight="bold" font-size="12.5" text-anchor="middle" letter-spacing=".5">
  <text x="578.5" y="219.5">1-K</text>
  <text x="647.5" y="205.5">2-K</text>
  <text x="837.5" y="191">3-K</text>
  <text x="1373.5" y="219.5" fill="#0000a0">4-K</text>
 </g>
</svg>
<!-- circle view -->
<svg class="a" style="left:1441px;top:149px" width="239" height="240" viewBox="1441 149 239 240">
 <defs>
  <radialGradient id="gBall" cx=".5" cy=".5" r=".55"><stop offset="0" stop-color="#e8e8e8"/><stop offset=".7" stop-color="#b0b0b0"/><stop offset="1" stop-color="#808080"/></radialGradient>
 </defs>
 <circle cx="1561" cy="283" r="91.5" fill="none" stroke="#2a2ab0" stroke-width="1.1" stroke-dasharray="1.4 2.1"/>
 <circle cx="1561.2" cy="283" r="81.4" fill="#adadad" stroke="#1a1a1a" stroke-width="1.5"/>
 <g stroke="#1818b0" stroke-width="1.4" fill="url(#gBall)">
  <circle cx="1561" cy="191.5" r="9.5"/>
  <circle cx="1474.3" cy="254.5" r="9.5"/>
  <circle cx="1647.7" cy="254.5" r="9.5"/>
  <circle cx="1507.5" cy="356.5" r="9.5"/>
  <circle cx="1614.5" cy="356.5" r="9.5"/>
 </g>
 <g stroke="#5050c0" stroke-width=".8" stroke-dasharray="2 2" opacity=".8">
  <path d="M1552 191.5H1570M1471.5 263L1477 246M1650.5 263L1645 246M1500 351L1515 362M1622 351L1607 362"/>
 </g>
 <path d="M1558 157H1564V173H1568L1561 182L1554 173H1558Z" fill="#000080"/>
</svg>
<div class="hl" style="left:508px;top:389px;width:1172px"></div>
<div class="hl" style="left:508px;top:393px;width:1172px"></div>

<!-- panels -->
<div class="a" style="left:508px;top:420px;width:1172px;height:532px;background:#fff"></div>
<div class="hl" style="left:508px;top:419px;width:1172px"></div>
<div class="hl" style="left:508px;top:952px;width:1172px"></div>
<div class="hl" style="left:0;top:983px;width:1680px"></div>
<!-- panel headers -->
<svg class="a" style="left:514px;top:397px" width="20" height="20"><use href="#cyl"/></svg>
<div class="t" style="left:539px;top:401px;font-weight:bold">Zylinder</div>
<svg class="a" style="left:904px;top:397px" width="20" height="20"><use href="#meas"/></svg>
<div class="t" style="left:929px;top:401px;font-weight:bold">Durchmesser-Messung</div>
<svg class="a" style="left:1297px;top:397px" width="20" height="20"><use href="#wave"/></svg>

<!-- panel 1 -->
<div class="t" style="left:517px;top:432px"><span class="u">N</span>ame</div>
<div class="fld" style="left:592px;top:425px;width:267px"></div>
<div class="t" style="left:517px;top:462px"><span class="u">L</span>änge</div>
<div class="fld" style="left:592px;top:455px;width:267px"><span>20</span></div>
<div class="t" style="left:864px;top:462px">mm</div>
<div class="t" style="left:517px;top:492px"><span class="u">D</span>urchmesser</div>
<div class="fld" style="left:592px;top:485px;width:267px"><span>25</span></div>
<div class="t" style="left:864px;top:492px">mm</div>
<div class="t" style="left:517px;top:522px"><span class="u">B</span>ohrungs-Ø</div>
<div class="fld" style="left:592px;top:515px;width:267px"><span>0</span></div>
<div class="t" style="left:864px;top:522px">mm</div>

<!-- panel 2 -->
<div class="t" style="left:907px;top:432px"><span class="u">N</span>ame</div>
<div class="fld" style="left:945px;top:425px;width:327px"><span>B</span></div>
<div class="t" style="left:907px;top:462px">M-ID</div>
<div class="fld" style="left:945px;top:455px;width:25px"><span>4</span></div>
<div class="t" style="left:975px;top:462px">-</div>
<div class="fld" style="left:985px;top:455px;width:224px"><span>K</span><span style="left:48px;font-style:italic">3 mm</span><svg style="position:absolute;left:36px;top:8px" width="12" height="10"><ellipse cx="6" cy="4.6" rx="3.6" ry="3" fill="none" stroke="#111" stroke-width="1.1" transform="skewX(-12) translate(1 0)"/><path d="M1.5 9L10.5 1" stroke="#111" stroke-width="1.1"/><path d="M1 8.5H5" stroke="#111" stroke-width="1"/></svg></div>
<div class="vl" style="left:1196px;top:456px;height:24px;background:#dcdce4"></div>
<svg class="a" style="left:1198px;top:468px" width="8" height="4"><path d="M0 0H8L4 3.5Z" fill="#777"/></svg>
<div class="t" style="left:1221px;top:462px"><span class="u">A</span>ktiv</div>
<div class="a" style="left:1254px;top:459px;width:18px;height:18px;border:1px solid #c6c6da;border-radius:6px;background:#f2f2f0"></div>
<svg class="a" style="left:1256px;top:461px" width="14" height="14"><path d="M3 7.5L6.2 11.5L10.8 2.5" fill="none" stroke="#4a6650" stroke-width="1.9"/></svg>
<div class="hl" style="left:907px;top:486px;width:370px;background:#c9c9d9"></div>
<div class="t" style="left:907px;top:499px"><span class="u">Z</span>iel</div>
<div class="fld" style="left:984px;top:492px;width:268px"><span>Außen-Ø</span></div>
<div class="vl" style="left:1239px;top:493px;height:24px;background:#dcdce4"></div>
<svg class="a" style="left:1241px;top:505px" width="8" height="4"><path d="M0 0H8L4 3.5Z" fill="#777"/></svg>
<div class="t" style="left:907px;top:529px"><span class="u">V</span>erschiebung</div>
<div class="fld" style="left:984px;top:522px;width:268px"><span>0</span></div>
<div class="t" style="left:1257px;top:529px">mm</div>
<div class="t" style="left:907px;top:559px"><span class="u">F</span>ensterbreite</div>
<div class="fld" style="left:984px;top:552px;width:268px"><span>2</span></div>
<div class="t" style="left:1257px;top:559px">mm</div>
<div class="t" style="left:907px;top:589px"><span class="u">M</span>esspunkte</div>
<div class="fld" style="left:984px;top:582px;width:268px"><span>5</span></div>

<!-- panel buttons -->
<div class="pbtn" style="left:513px;top:956px"><svg width="22" height="22"><use href="#bplus"/></svg></div>
<div class="pbtn ar" style="left:674px;top:956px"><svg width="22" height="22"><use href="#bleft"/></svg></div>
<div class="pbtn ar" style="left:702px;top:956px"><svg width="22" height="22"><use href="#bright"/></svg></div>
<div class="pbtn" style="left:864px;top:956px"><svg width="22" height="22"><use href="#bx"/></svg></div>
<div class="pbtn" style="left:903px;top:956px"><svg width="22" height="22"><use href="#bplus"/></svg></div>
<div class="pbtn ar" style="left:1066px;top:956px"><svg width="22" height="22"><use href="#bleft"/></svg></div>
<div class="pbtn ar" style="left:1094px;top:956px"><svg width="22" height="22"><use href="#bright"/></svg></div>
<div class="pbtn" style="left:1257px;top:956px"><svg width="22" height="22"><use href="#bx"/></svg></div>
<div class="pbtn" style="left:1296px;top:956px"><svg width="22" height="22"><use href="#bplus"/></svg></div>
<div class="pbtn ar" style="left:1459px;top:956px"><svg width="22" height="22"><use href="#bleft"/></svg></div>
<div class="pbtn ar" style="left:1487px;top:956px"><svg width="22" height="22"><use href="#bright"/></svg></div>
<div class="pbtn" style="left:1651px;top:956px"><svg width="22" height="22"><use href="#bx"/></svg></div>

<div class="vl" style="left:893px;top:394px;height:589px"></div>
<div class="vl" style="left:897px;top:394px;height:589px"></div>
<div class="vl" style="left:1286px;top:394px;height:589px"></div>
<div class="vl" style="left:1290px;top:394px;height:589px"></div>

</body></html>
